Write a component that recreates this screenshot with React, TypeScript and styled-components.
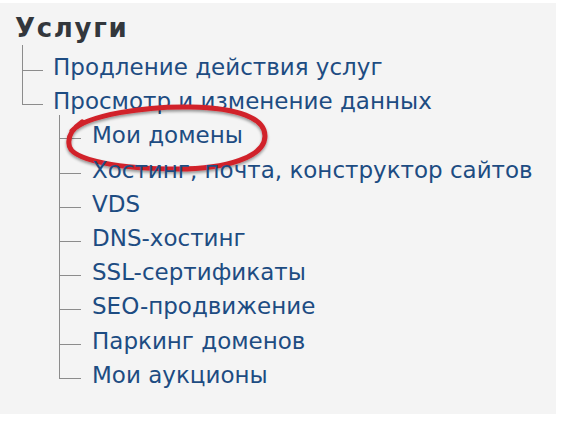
import React from "react";
import styled, { createGlobalStyle } from "styled-components";

const GlobalStyle = createGlobalStyle`
  html, body { margin: 0; padding: 0; background: #ffffff; }
  body { font-family: "DejaVu Sans", Verdana, sans-serif; }
`;

const Page = styled.div`
  width: 574px;
  height: 426px;
  background: #ffffff;
  padding: 3px 18px 12px 0;
  box-sizing: border-box;
  display: flex;
`;

const Panel = styled.div`
  flex: 1;
  background: #f4f4f4;
  box-sizing: border-box;
  padding: 8px 0 0 15px;
  display: flex;
  flex-direction: column;
  gap: 5px;
`;

const Title = styled.h2`
  margin: 0;
  font-family: "DejaVu Sans", Verdana, sans-serif;
  font-weight: 700;
  font-size: 26px;
  line-height: 34px;
  letter-spacing: 1.7px;
  color: #33373c;
`;

const Tree = styled.ul<{ $indent: number; $lead: number }>`
  list-style: none;
  margin: 0;
  padding: 0 0 0 ${(p) => p.$indent}px;
  display: flex;
  flex-direction: column;
  & > li:first-child::after,
  & > li:first-child::before {
    top: -${(p) => p.$lead}px;
  }
  & > li:first-child::before {
    height: ${(p) => 20 + p.$lead}px;
  }
`;

const Item = styled.li<{ $gap: number; $branch: number }>`
  position: relative;
  display: flex;
  flex-direction: column;
  padding-left: ${(p) => p.$gap}px;

  &::before {
    content: "";
    position: absolute;
    left: 0;
    top: 0;
    width: ${(p) => p.$branch}px;
    height: 20px;
    border-left: 1px solid #8c8c8c;
    border-bottom: 1px solid #8c8c8c;
  }
  &:not(:last-child)::after {
    content: "";
    position: absolute;
    left: 0;
    top: 0;
    bottom: 0;
    border-left: 1px solid #8c8c8c;
  }
`;

const Label = styled.span`
  font-family: "DejaVu Sans", Verdana, sans-serif;
  font-size: 23px;
  line-height: 34.2px;
  color: #1d4c82;
  white-space: nowrap;
`;

const Mark = styled.svg`
  position: absolute;
  left: 7px;
  top: -13px;
  width: 200px;
  height: 68px;
  overflow: visible;
  pointer-events: none;
`;

const level2 = [
  "Хостинг, почта, конструктор сайтов",
  "VDS",
  "DNS-хостинг",
  "SSL-сертификаты",
  "SEO-продвижение",
  "Паркинг доменов",
  "Мои аукционы",
];

export default function App() {
  return (
    <Page>
      <GlobalStyle />
      <Panel>
        <Title>Услуги</Title>
        <Tree $indent={7} $lead={5}>
          <Item $gap={31} $branch={20}>
            <Label>Продление действия услуг</Label>
          </Item>
          <Item $gap={31} $branch={20}>
            <Label>Просмотр и изменение данных</Label>
            <Tree $indent={6} $lead={3}>
              <Item $gap={33} $branch={21}>
                <Label>Мои домены</Label>
                <Mark viewBox="0 0 200 68">
                  <defs>
                    <filter id="sh" x="-10%" y="-30%" width="120%" height="170%">
                      <feGaussianBlur in="SourceAlpha" stdDeviation="1.5" />
                      <feOffset dx="0" dy="2" />
                      <feComponentTransfer>
                        <feFuncA type="linear" slope="0.4" />
                      </feComponentTransfer>
                      <feMerge>
                        <feMergeNode />
                        <feMergeNode in="SourceGraphic" />
                      </feMerge>
                    </filter>
                  </defs>
                  <path
                    d="M6 26 C 20 10, 80 1, 125 2 C 172 3, 199 13, 199 31 C 199 52, 160 64, 112 64 C 58 64, 3 56, 3 39 C 2 32, 6 24, 16 17"
                    fill="none"
                    stroke="#d1232b"
                    strokeWidth="5"
                    strokeLinecap="round"
                    filter="url(#sh)"
                  />
                </Mark>
              </Item>
              {level2.map((t) => (
                <Item key={t} $gap={33} $branch={21}>
                  <Label>{t}</Label>
                </Item>
              ))}
            </Tree>
          </Item>
        </Tree>
      </Panel>
    </Page>
  );
}
